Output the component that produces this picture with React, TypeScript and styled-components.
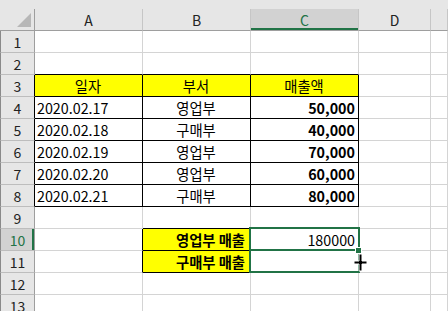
import React from "react";
import styled, {createGlobalStyle, css} from "styled-components";

const GlobalStyle = createGlobalStyle`
  html, body {
    margin: 0;
    padding: 0;
    background: #ffffff;
  }
  body {
    font-family: "Noto Sans CJK KR", "Noto Sans", sans-serif;
  }
`;

const GREEN = "#217346";
const GRID = "#d4d4d4";
const HEAD_BG = "#e6e6e6";
const HEAD_SEL = "#d2d2d2";

const Sheet = styled.div`
  width: 448px;
  height: 311px;
  overflow: hidden;
  background: #ffffff;
  display: flex;
  flex-direction: column;
`;

const TopStrip = styled.div`
  height: 9px;
  flex: none;
  background: ${HEAD_BG};
`;

const Grid = styled.div`
  position: relative;
  display: grid;
  grid-template-columns: 35px 108px 108px 108px 72px 1fr;
  grid-auto-rows: 22px;
  font-size: 14.3px;
  color: #000;
`;

const Corner = styled.div`
  background: ${HEAD_BG};
  border-right: 1px solid #9e9e9e;
  border-bottom: 1px solid #9e9e9e;
  display: flex;
  align-items: flex-end;
  justify-content: flex-end;
  padding: 0 3px 3px 0;
`;

const Triangle = styled.div`
  width: 0;
  height: 0;
  border-left: 14px solid transparent;
  border-bottom: 14px solid #b7b7b7;
`;

const ColHead = styled.div<{ $sel?: boolean }>`
  background: ${p => p.$sel ? HEAD_SEL : HEAD_BG};
  border-right: 1px solid #c6c6c6;
  border-bottom: 1px solid #9e9e9e;
  display: flex;
  align-items: center;
  justify-content: center;
  font-size: 14px;
  color: ${p => p.$sel ? GREEN : "#222"};
  ${p => p.$sel && css`
    box-shadow: inset 0 -2px 0 ${GREEN};
  `}
`;

const RowHead = styled.div<{ $sel?: boolean; $black?: boolean }>`
  background: ${p => p.$sel ? HEAD_SEL : HEAD_BG};
  border-left: 1px solid #8a8a8a;
  border-right: 1px solid ${p => p.$black ? "#000" : "#9e9e9e"};
  border-bottom: 1px solid #bdbdbd;
  display: flex;
  align-items: center;
  justify-content: center;
  font-size: 14px;
  color: ${p => p.$sel ? GREEN : "#222"};
  ${p => p.$sel && css`
    box-shadow: inset -2px 0 0 ${GREEN};
  `}
`;

type Align = "left" | "center" | "right";

const Cell = styled.div<{ $align: Align; $bold?: boolean; $fill?: boolean; $br?: boolean; $bb?: boolean; $pr?: number }>`
  background: ${p => p.$fill ? "#ffff00" : "#ffffff"};
  border-right: 1px solid ${p => p.$br ? "#000" : GRID};
  border-bottom: 1px solid ${p => p.$bb ? "#000" : GRID};
  display: flex;
  align-items: center;
  justify-content: ${p => p.$align === "left" ? "flex-start" : p.$align === "right" ? "flex-end" : "center"};
  padding: 0 ${p => p.$pr ?? 3}px 0 2px;
  font-weight: ${p => p.$bold ? 700 : 400};
  white-space: nowrap;
  overflow: hidden;
`;

// lies over the C10:C11 cells, placed by grid area
const Selection = styled.div`
  position: absolute;
  grid-column: 4 / 5;
  grid-row: 11 / 13;
  top: -2px;
  left: -2px;
  right: -1px;
  bottom: 0;
  border: 2px solid ${GREEN};
  pointer-events: none;
  display: flex;
  flex-direction: column;
`;

const ActiveCell = styled.div`
  flex: 1;
  border-bottom: 2px solid ${GREEN};
`;

const Filler = styled.div`
  flex: 1;
`;

const FillHandle = styled.div`
  position: absolute;
  right: -4px;
  top: 18px;
  width: 5px;
  height: 5px;
  background: ${GREEN};
  border: 1px solid #ffffff;
`;

const Cursor = styled.svg`
  position: absolute;
  right: -10px;
  bottom: -1px;
`;

type CellData = { text?: string; align?: Align; bold?: boolean; fill?: boolean; pr?: number };

const dates = ["2020.02.17", "2020.02.18", "2020.02.19", "2020.02.20", "2020.02.21"];
const depts = ["영업부", "구매부", "영업부", "영업부", "구매부"];
const sales = ["50,000", "40,000", "70,000", "60,000", "80,000"];

const rows: CellData[][] = [];
for (let r = 1; r <= 13; r++) {
    const row: CellData[] = [{}, {}, {}, {}, {}];
    if (r === 3) {
        row[0] = {text: "일자", align: "center", fill: true};
        row[1] = {text: "부서", align: "center", fill: true};
        row[2] = {text: "매출액", align: "center", fill: true};
    } else if (r >= 4 && r <= 8) {
        row[0] = {text: dates[r - 4], align: "left"};
        row[1] = {text: depts[r - 4], align: "center"};
        row[2] = {text: sales[r - 4], align: "right", bold: true};
    } else if (r === 10) {
        row[1] = {text: "영업부 매출", align: "right", bold: true, fill: true, pr: 5};
        row[2] = {text: "180000", align: "right"};
    } else if (r === 11) {
        row[1] = {text: "구매부 매출", align: "right", bold: true, fill: true, pr: 5};
    }
    rows.push(row);
}

// black-bordered ranges: A3:C8 and B10:B11
const boxed = (r: number, c: number) =>
    (r >= 3 && r <= 8 && c >= 0 && c <= 2) || (r >= 10 && r <= 11 && c === 1);

const COLS = ["A", "B", "C", "D", ""];

export default function App() {
    return (
        <>
            <GlobalStyle/>
            <Sheet>
                <TopStrip/>
                <Grid>
                    <Corner><Triangle/></Corner>
                    {COLS.map((c, i) => (
                        <ColHead key={i} $sel={c === "C"}>{c}</ColHead>
                    ))}
                    {rows.map((row, ri) => {
                        const r = ri + 1;
                        return (
                            <React.Fragment key={r}>
                                <RowHead $sel={r === 10} $black={boxed(r, 0)}>{r}</RowHead>
                                {row.map((cell, c) => (
                                    <Cell
                                        key={c}
                                        $align={cell.align ?? "left"}
                                        $bold={cell.bold}
                                        $fill={cell.fill}
                                        $pr={cell.pr}
                                        $br={boxed(r, c) || boxed(r, c + 1)}
                                        $bb={boxed(r, c) || boxed(r + 1, c)}
                                    >
                                        {cell.text}
                                    </Cell>
                                ))}
                            </React.Fragment>
                        );
                    })}
                    <Selection>
                        <ActiveCell/>
                        <Filler/>
                        <FillHandle/>
                        <Cursor width="15" height="19" viewBox="0 0 15 19">
                            <path d="M6 1h3v7h5v3H9v7H6v-7H1V8h5z" fill="#000" stroke="#fff" strokeWidth="1"/>
                        </Cursor>
                    </Selection>
                </Grid>
            </Sheet>
        </>
    );
}
